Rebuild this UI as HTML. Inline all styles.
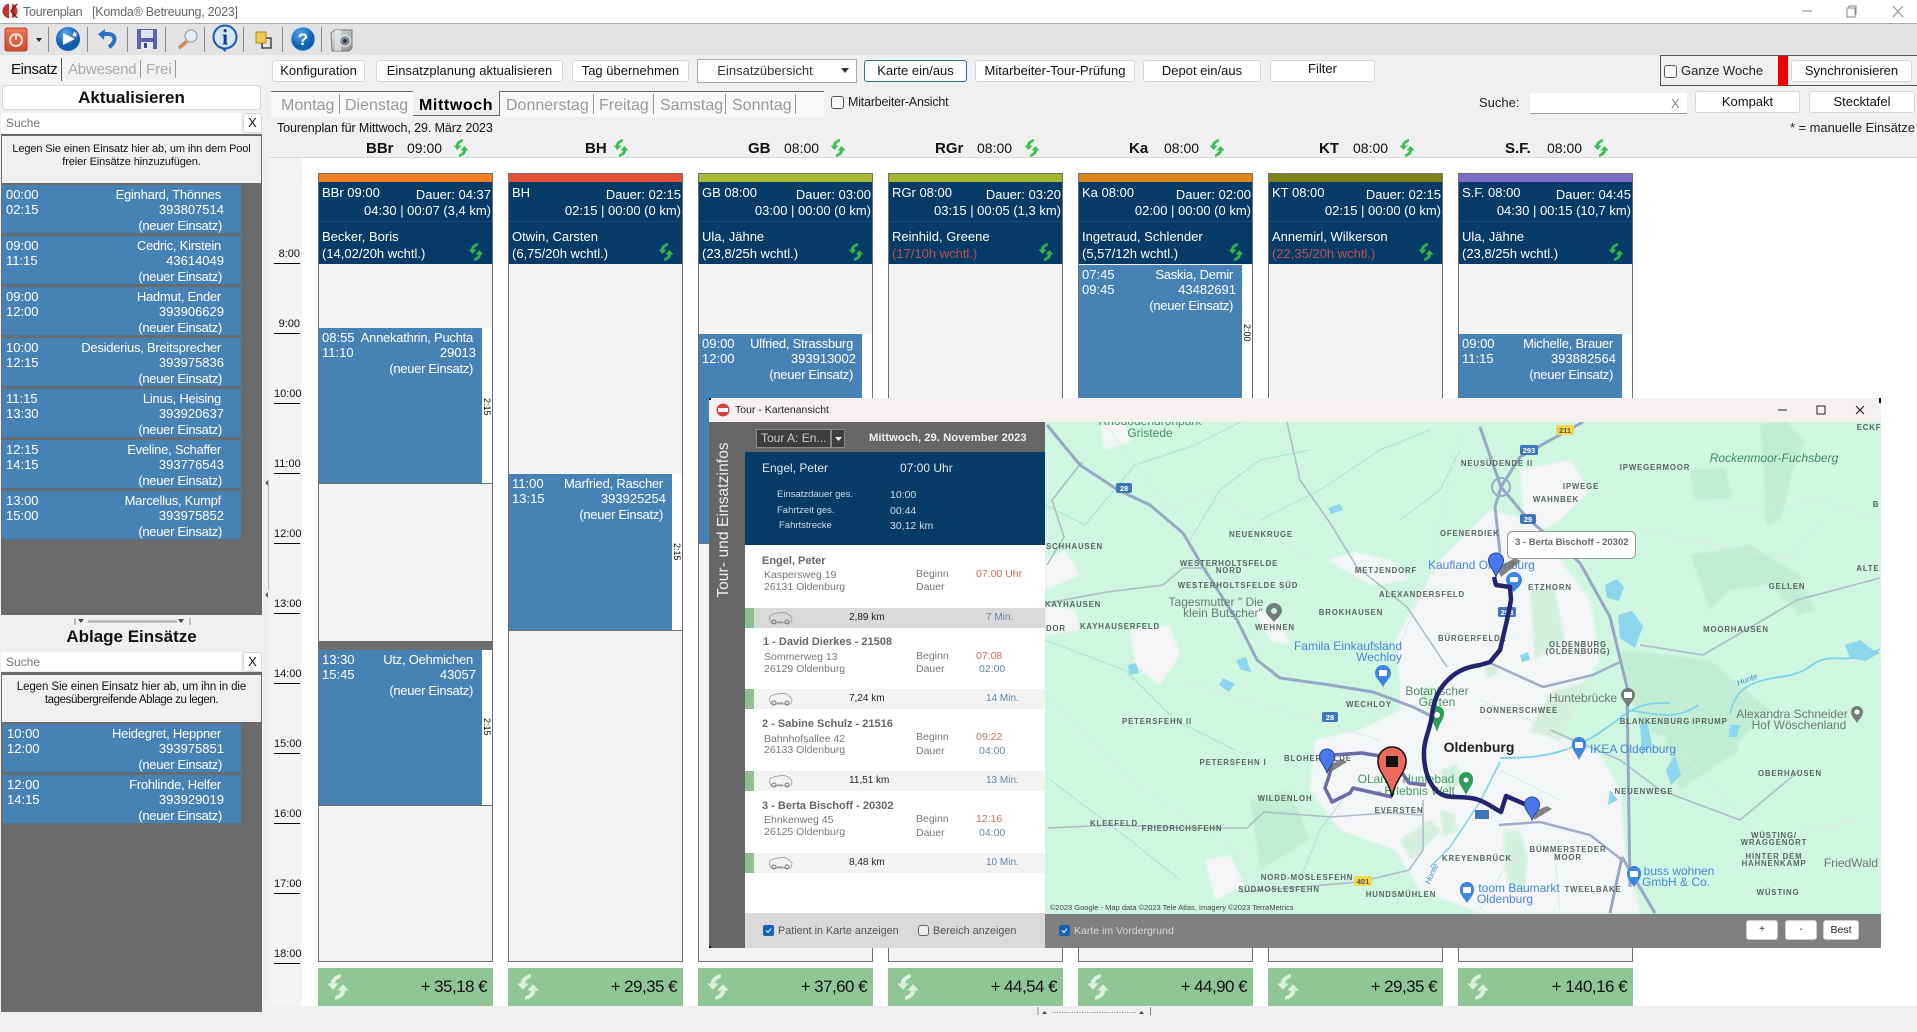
<!DOCTYPE html>
<html lang="de"><head><meta charset="utf-8"><title>Tourenplan</title>
<style>
html,body{margin:0;padding:0;width:1917px;height:1032px;overflow:hidden;background:#f0f0f0}
body{position:relative;font-family:"Liberation Sans",sans-serif;font-size:13px;color:#111}
.a,.b,.it,.col,.ev,.tot,.cb,.h,.t,.ctime{position:absolute;white-space:nowrap}
.t{line-height:16px}
.b{background:#fff;border:1px solid #d6d6d6;border-radius:3px;text-align:center;box-sizing:border-box;font-size:13px;line-height:20px;color:#111}
.cb{width:13px;height:13px;border:1px solid #555;border-radius:3px;background:#fff;box-sizing:border-box}
.it{background:#4682b4;color:#fff;height:48px;width:239px;left:2px;box-shadow:0 1px 0 #5b6f80}
.it span,.ev span{position:absolute;line-height:16px;white-space:nowrap}
.l1{top:1.5px;left:4px}.l2{top:16.5px;left:4px}
.r1{top:1.5px;right:20px;letter-spacing:-.25px}.r2{top:16.5px;right:17px}.r3{top:32.5px;right:19px;letter-spacing:-.3px}
.col{top:173px;width:175px;height:789px;border:1px solid #6e6e6e;box-sizing:border-box;background:#f3f3f3}
.col .bar{position:absolute;left:0;right:0;top:0;height:8px}
.col .hd{position:absolute;left:0;right:0;top:8px;height:82px;background:#053b66;color:#fff}
.col .hd span{position:absolute;line-height:16px;white-space:nowrap}
.col .hd .dv{left:0;right:0;top:39px;height:1px;background:#1a4d75}
.col .hd svg{position:absolute;left:149px;top:61px;width:16px;height:18px;color:#33b24a}
.ev{left:0;width:173px;background:#fff;border-bottom:1px solid #6e6e6e;box-sizing:border-box}
.ev .bl{position:absolute;left:0;top:0;bottom:0;width:163px;background:#4682b4;color:#fff}
.ev .r1{top:2px;right:9px}.ev .r2{top:17px;right:6px}.ev .r3{top:33px;right:9px}
.ev .l1{top:2px;left:3px}.ev .l2{top:17px;left:3px}
.ev .rot{position:absolute;left:163px;width:10px;writing-mode:vertical-rl;font-size:9px;line-height:10px;color:#000;text-align:center}
.h{top:139px;line-height:18px;font-size:14px}
.h b{font-size:15px}
.hi{position:absolute;top:139px;width:16px;height:18px;color:#3cc04f}
.tm{position:absolute;left:274px;width:26px;border-bottom:1px solid #000;height:16px;text-align:right;font-size:11px;line-height:14px;color:#111}
.tot{top:968px;width:175px;height:38px;background:#90c695;color:#111;font-size:17px;line-height:38px;text-align:right;box-sizing:border-box;padding-right:6px;letter-spacing:-.55px}
.tot svg{position:absolute;left:8px;top:6px;width:24px;height:26px;color:#dcefdc}
.tab{position:absolute;top:94.500px;font-size:16px;line-height:22px;color:#9a9a9a}
.sep{position:absolute;width:1px;background:#999}
.m{font-size:10.500px;color:#777;position:absolute;line-height:13px;white-space:nowrap}
.mb{font-size:11px;font-weight:bold;color:#666;position:absolute;line-height:14px;white-space:nowrap}
.strip{position:absolute;left:745px;width:300px;height:20px;background:#f3f3f3}
.strip i{position:absolute;left:0;top:0;bottom:0;width:9px;background:#8cc08e}
.strip svg{position:absolute;left:24px;top:2px;width:24px;height:16px}
.strip span{position:absolute;line-height:20px;font-size:10px;white-space:nowrap}
.map text{font-family:"Liberation Sans",sans-serif}
.c{font-size:7.800px;font-weight:bold;letter-spacing:.85px;fill:#5a6662;text-anchor:middle}
.g{font-size:12px;fill:#4d8d6c;text-anchor:middle}
.bl2{font-size:12px;fill:#4a86d6;text-anchor:middle}
.gr{font-size:12px;fill:#6d7a76;text-anchor:middle}
.sh{font-size:7.500px;font-weight:bold;fill:#fff;text-anchor:middle}
</style></head><body>

<svg width="0" height="0" style="position:absolute"><defs>
<symbol id="r" viewBox="0 0 16 18"><path d="M10 0C6 1 3 3 3 6.500H.5L4.500 11 8.500 6.500H6C6 5 7.500 3.500 10 2.500zM6 18C10 17 13 15 13 11.500H15.500L11.500 7 7.500 11.500H10C10 13 8.500 14.500 6 15.500z" fill="currentColor"/></symbol>
<symbol id="car" viewBox="0 0 24 16"><path d="M1 6C4 3 14 2 17 3c3 1 5 4 6 5 0 3-1 5-2 5H2C1 11 0 8 1 6z" fill="none" stroke="#999" stroke-width=".8"/><circle cx="5" cy="12" r="2" fill="none" stroke="#777"/><circle cx="18" cy="12" r="2" fill="none" stroke="#777"/><path d="M8 12h6" stroke="#888"/></symbol>
<filter id="sf"><feGaussianBlur stdDeviation="1"/></filter>
</defs></svg>

<!-- title bar -->
<div class="a" style="left:0;top:0;width:1917px;height:23px;background:#fff;border-bottom:1px solid #a8a8a8"></div>
<svg class="a" style="left:2px;top:3px" width="16" height="16" viewBox="0 0 16 16"><circle cx="8" cy="8" r="7.500" fill="#c5332c"/><path d="M7 0h3v16H7z" fill="#fff"/><path d="M8 8l6-7h2L10 8l6 7h-2z" fill="#7a1f1c"/></svg>
<div class="t" style="left:23px;top:4px;font-size:12.500px;color:#666;letter-spacing:-.25px">Tourenplan &nbsp; [Komda® Betreuung, 2023]</div>
<svg class="a" style="left:1790px;top:0" width="127" height="23" viewBox="0 0 127 23"><path d="M12 11h10" stroke="#888"/><path d="M57 8h8v9h-8zM59 8V6h7v8h-1" fill="none" stroke="#888"/><path d="M103 6l10 11M113 6l-10 11" stroke="#888"/></svg>

<!-- toolbar -->
<div class="a" style="left:0;top:24px;width:1917px;height:31px;background:#e3e3e3"></div>
<svg class="a" style="left:0;top:0" width="400" height="56" viewBox="0 0 400 56">
<defs><linearGradient id="pw" x1="0" y1="0" x2="0" y2="1"><stop offset="0" stop-color="#f07a55"/><stop offset="1" stop-color="#cf4a30"/></linearGradient>
<radialGradient id="bl" cx=".4" cy=".3"><stop offset="0" stop-color="#5aa8ee"/><stop offset="1" stop-color="#0e5fb0"/></radialGradient>
<linearGradient id="cam" x1="0" y1="0" x2="1" y2="1"><stop offset="0" stop-color="#e8e8e8"/><stop offset="1" stop-color="#8e8e8e"/></linearGradient></defs>
<rect x="5" y="28" width="22" height="23" rx="2" fill="url(#pw)" stroke="#b5452e"/>
<circle cx="16" cy="40" r="6" fill="none" stroke="#f6e2d8" stroke-width="2"/><path d="M16 35v5" stroke="#f6e2d8" stroke-width="2"/>
<path d="M36 38h6l-3 4z" fill="#222"/>
<g stroke="#8a8a8a"><path d="M48.500 27v25M87.500 27v25M127.500 27v25M165.500 27v25M204.500 27v25M243.500 27v25M282.500 27v25M321.500 27v25"/></g>
<circle cx="68" cy="39" r="12" fill="url(#bl)"/><path d="M63 33l12 6-12 6z" fill="#fff"/><path d="M74 31l1 2 2-1-1 2 2 1-2 .5.500 2-2-1.500-1 1.500v-2l-2-.5 2-1z" fill="#fff"/>
<path d="M109 47c7-4 8-13-1-13h-5" fill="none" stroke="#2a6fc4" stroke-width="4"/><path d="M105 29l-7 5 6 6z" fill="#2a6fc4"/>
<rect x="137" y="29" width="20" height="20" fill="#5b63ad"/><rect x="141" y="30" width="12" height="8" fill="#dfe2f2"/><rect x="141" y="42" width="12" height="7" fill="#e8ecf4"/><rect x="144" y="43" width="3" height="5" fill="#3e4682"/>
<path d="M187 41l-8 7" stroke="#d08a58" stroke-width="3.500"/><circle cx="191" cy="36" r="6" fill="#e6f0f8" stroke="#9db5c8" stroke-width="1.500"/>
<path d="M225 52l-6-6h9z" fill="#1a5ca8"/><circle cx="225" cy="37" r="11.500" fill="#d4e6f6" stroke="#1a5ca8" stroke-width="2"/><text x="225" y="44.500" font-family="Liberation Serif,serif" font-weight="bold" font-size="22" text-anchor="middle" fill="#113f86">i</text>
<rect x="256" y="32" width="10" height="11" fill="#f1c84e" stroke="#b08b20"/><path d="M266 38h5v10h-9v-5" fill="none" stroke="#444" stroke-width="1.500"/>
<circle cx="303" cy="39" r="12" fill="url(#bl)" stroke="#b8d2ee"/><text x="303" y="45" font-weight="bold" font-size="17" text-anchor="middle" fill="#fff" font-family="Liberation Sans,sans-serif">?</text>
<path d="M331 33l4-3h17v18l-3 3h-17z" fill="url(#cam)" stroke="#777"/><path d="M335 30h6v21h-6z" fill="#eaeaea" opacity=".7"/><circle cx="345" cy="41" r="5.500" fill="#7f8b94" stroke="#e2e2e2" stroke-width="1.500"/><circle cx="345" cy="41" r="2" fill="#2b3540"/>
</svg>

<!-- left panel -->
<div class="a" style="left:0;top:55px;width:263px;height:30px;background:#f2f2f2"></div>
<div class="t" style="left:11px;top:62px;font-size:15px;letter-spacing:-.4px">Einsatz</div>
<div class="sep" style="left:61px;top:58px;height:23px;background:#555"></div>
<div class="t" style="left:68px;top:62px;font-size:15px;letter-spacing:-.2px;color:#aaa">Abwesend</div>
<div class="sep" style="left:140px;top:60px;height:18px"></div>
<div class="t" style="left:146px;top:62px;font-size:15px;color:#aaa">Frei</div>
<div class="sep" style="left:175px;top:60px;height:18px"></div>
<div class="b" style="left:2px;top:85px;width:259px;height:25px;font-weight:bold;font-size:17px;line-height:24px;color:#111;border-radius:4px">Aktualisieren</div>
<div class="a" style="left:1px;top:113px;width:240px;height:20px;background:#fff"></div>
<div class="t" style="left:6px;top:115px;font-size:12px;color:#777">Suche</div>
<div class="b" style="left:243px;top:113px;width:19px;height:20px;line-height:18px;font-size:13px">X</div>
<div class="a" style="left:1px;top:134px;width:261px;height:481px;background:#6b6b6b"></div>
<div class="a" style="left:2px;top:136px;width:259px;height:47px;background:#f0f0f0"></div>
<div class="t" style="left:3px;top:141px;width:257px;text-align:center;font-size:11px;letter-spacing:-.12px">Legen Sie einen Einsatz hier ab, um ihn dem Pool</div>
<div class="t" style="left:3px;top:154px;width:257px;text-align:center;font-size:11px;letter-spacing:-.12px">freier Einsätze hinzuzufügen.</div>

<div class="it" style="top:185px"><span class="l1">00:00</span><span class="l2">02:15</span><span class="r1">Eginhard, Thönnes</span><span class="r2">393807514</span><span class="r3">(neuer Einsatz)</span></div>
<div class="it" style="top:236px"><span class="l1">09:00</span><span class="l2">11:15</span><span class="r1">Cedric, Kirstein</span><span class="r2">43614049</span><span class="r3">(neuer Einsatz)</span></div>
<div class="it" style="top:287px"><span class="l1">09:00</span><span class="l2">12:00</span><span class="r1">Hadmut, Ender</span><span class="r2">393906629</span><span class="r3">(neuer Einsatz)</span></div>
<div class="it" style="top:338px"><span class="l1">10:00</span><span class="l2">12:15</span><span class="r1">Desiderius, Breitsprecher</span><span class="r2">393975836</span><span class="r3">(neuer Einsatz)</span></div>
<div class="it" style="top:389px"><span class="l1">11:15</span><span class="l2">13:30</span><span class="r1">Linus, Heising</span><span class="r2">393920637</span><span class="r3">(neuer Einsatz)</span></div>
<div class="it" style="top:440px"><span class="l1">12:15</span><span class="l2">14:15</span><span class="r1">Eveline, Schaffer</span><span class="r2">393776543</span><span class="r3">(neuer Einsatz)</span></div>
<div class="it" style="top:491px"><span class="l1">13:00</span><span class="l2">15:00</span><span class="r1">Marcellus, Kumpf</span><span class="r2">393975852</span><span class="r3">(neuer Einsatz)</span></div>

<svg class="a" style="left:70px;top:616px" width="125" height="10" viewBox="0 0 125 10"><path d="M5 2v7M120 2v7" stroke="#888"/><path d="M8 3h6l-3 4zM108 3h6l-3 4z" fill="#444"/><path d="M18 5.500h89" stroke="#aaa" stroke-width="2"/></svg>
<div class="t" style="left:0;top:627px;width:263px;text-align:center;font-weight:bold;font-size:17px;line-height:20px">Ablage Einsätze</div>
<div class="a" style="left:1px;top:652px;width:240px;height:19px;background:#fff"></div>
<div class="t" style="left:6px;top:654px;font-size:12px;color:#777">Suche</div>
<div class="b" style="left:243px;top:652px;width:19px;height:20px;line-height:18px;font-size:13px">X</div>
<div class="a" style="left:1px;top:672px;width:261px;height:340px;background:#6b6b6b"></div>
<div class="a" style="left:2px;top:675px;width:259px;height:47px;background:#f0f0f0"></div>
<div class="t" style="left:3px;top:679px;width:257px;text-align:center;font-size:11.500px;letter-spacing:-.1px">Legen Sie einen Einsatz hier ab, um ihn in die</div>
<div class="t" style="left:3px;top:692px;width:257px;text-align:center;font-size:11.500px;letter-spacing:-.4px">tagesübergreifende Ablage zu legen.</div>
<div class="it" style="top:724px;left:3px;width:238px"><span class="l1">10:00</span><span class="l2">12:00</span><span class="r1">Heidegret, Heppner</span><span class="r2">393975851</span><span class="r3">(neuer Einsatz)</span></div>
<div class="it" style="top:775px;left:3px;width:238px"><span class="l1">12:00</span><span class="l2">14:15</span><span class="r1">Frohlinde, Helfer</span><span class="r2">393929019</span><span class="r3">(neuer Einsatz)</span></div>

<!-- splitter -->
<div class="sep" style="left:268px;top:480px;height:110px;background:#bbb"></div>
<svg class="a" style="left:263px;top:478px" width="6" height="122" viewBox="0 0 6 122"><path d="M5 2 2 5l3 3zM5 114l-3 3 3 3z" fill="#666"/></svg>

<!-- top buttons -->
<div class="b" style="left:272px;top:60px;width:93px;height:22px">Konfiguration</div>
<div class="b" style="left:376px;top:60px;width:187px;height:22px">Einsatzplanung aktualisieren</div>
<div class="b" style="left:572px;top:60px;width:117px;height:22px">Tag übernehmen</div>
<div class="b" style="left:697px;top:59px;width:160px;height:24px;border-color:#aaa;border-radius:0;line-height:22px;color:#333;padding-right:24px">Einsatzübersicht</div>
<svg class="a" style="left:841px;top:68px" width="8" height="6"><path d="M0 0h8L4 5z" fill="#333"/></svg>
<div class="b" style="left:864px;top:60px;width:103px;height:22px;border-color:#2f6fa8">Karte ein/aus</div>
<div class="b" style="left:975px;top:60px;width:160px;height:22px">Mitarbeiter-Tour-Prüfung</div>
<div class="b" style="left:1143px;top:60px;width:118px;height:22px">Depot ein/aus</div>
<div class="b" style="left:1270px;top:60px;width:105px;height:22px;line-height:16px">Filter</div>

<div class="a" style="left:1660px;top:55px;width:257px;height:31px;border:1px solid #555;box-sizing:border-box;border-right:0"></div>
<div class="cb" style="left:1664px;top:65px"></div>
<div class="t" style="left:1681px;top:63px;font-size:13px;color:#222">Ganze Woche</div>
<div class="a" style="left:1778px;top:56px;width:10px;height:30px;background:#f00000"></div>
<div class="b" style="left:1791px;top:60px;width:121px;height:22px">Synchronisieren</div>
<div class="t" style="left:1479px;top:95px;font-size:13px;color:#222">Suche:</div>
<div class="a" style="left:1530px;top:93px;width:157px;height:21px;background:#fff;border-bottom:1px solid #999;box-sizing:border-box"></div>
<div class="t" style="left:1671px;top:96px;font-size:13px;color:#888">X</div>
<div class="b" style="left:1695px;top:91px;width:105px;height:22px">Kompakt</div>
<div class="b" style="left:1809px;top:91px;width:106px;height:22px">Stecktafel</div>
<div class="t" style="right:2px;top:120px;font-size:13px;color:#222;letter-spacing:-.05px">* = manuelle Einsätze</div>

<!-- day tabs -->
<div class="a" style="left:271px;top:91px;width:553px;height:26px;background:#f8f8f8"></div>
<div class="a" style="left:271px;top:91px;width:142px;height:1px;background:#666"></div>
<div class="a" style="left:413px;top:91px;width:87px;height:25px;background:#f0f0f0;border-bottom:1px solid #666;border-right:1px solid #666;box-sizing:border-box"></div>
<div class="a" style="left:499px;top:91px;width:325px;height:1px;background:#666"></div>
<div class="tab" style="left:281px">Montag</div><div class="sep" style="left:339px;top:94px;height:20px"></div>
<div class="tab" style="left:345px">Dienstag</div>
<div class="tab" style="left:419px;color:#000;font-weight:bold;letter-spacing:.6px">Mittwoch</div>
<div class="tab" style="left:506px">Donnerstag</div><div class="sep" style="left:593px;top:94px;height:20px"></div>
<div class="tab" style="left:599px">Freitag</div><div class="sep" style="left:653px;top:94px;height:20px"></div>
<div class="tab" style="left:660px">Samstag</div><div class="sep" style="left:725px;top:94px;height:20px"></div>
<div class="tab" style="left:732px">Sonntag</div><div class="sep" style="left:795px;top:94px;height:20px"></div>
<div class="cb" style="left:831px;top:96px"></div>
<div class="t" style="left:848px;top:94px;font-size:12.500px;color:#222;letter-spacing:-.2px">Mitarbeiter-Ansicht</div>
<div class="t" style="left:277px;top:120px;font-size:12.500px;color:#111;letter-spacing:-.1px">Tourenplan für Mittwoch, 29. März 2023</div>

<!-- grid background -->
<div class="a" style="left:270px;top:157px;width:1647px;height:1px;background:#d6d6d6"></div>
<div class="a" style="left:302px;top:158px;width:1615px;height:848px;background:#fff"></div>
<div class="a" style="left:270px;top:158px;width:32px;height:848px;background:#f3f3f3"></div>

<div class="tm" style="top:247px">8:00</div>
<div class="tm" style="top:317px">9:00</div>
<div class="tm" style="top:387px">10:00</div>
<div class="tm" style="top:457px">11:00</div>
<div class="tm" style="top:527px">12:00</div>
<div class="tm" style="top:597px">13:00</div>
<div class="tm" style="top:667px">14:00</div>
<div class="tm" style="top:737px">15:00</div>
<div class="tm" style="top:807px">16:00</div>
<div class="tm" style="top:877px">17:00</div>
<div class="tm" style="top:947px">18:00</div>

<!-- column heads -->
<div class="h" style="left:366px"><b>BBr</b></div><div class="h" style="left:407px">09:00</div><svg class="hi" style="left:453px"><use href="#r"/></svg>
<div class="h" style="left:585px"><b>BH</b></div><svg class="hi" style="left:613px"><use href="#r"/></svg>
<div class="h" style="left:748px"><b>GB</b></div><div class="h" style="left:784px">08:00</div><svg class="hi" style="left:830px"><use href="#r"/></svg>
<div class="h" style="left:935px"><b>RGr</b></div><div class="h" style="left:977px">08:00</div><svg class="hi" style="left:1024px"><use href="#r"/></svg>
<div class="h" style="left:1129px"><b>Ka</b></div><div class="h" style="left:1164px">08:00</div><svg class="hi" style="left:1209px"><use href="#r"/></svg>
<div class="h" style="left:1319px"><b>KT</b></div><div class="h" style="left:1353px">08:00</div><svg class="hi" style="left:1399px"><use href="#r"/></svg>
<div class="h" style="left:1505px"><b>S.F.</b></div><div class="h" style="left:1547px">08:00</div><svg class="hi" style="left:1593px"><use href="#r"/></svg>

<!-- columns -->
<div class="col" style="left:318px"><div class="bar" style="background:#f58220"></div><div class="hd"><span style="left:3px;top:3px">BBr 09:00</span><span style="right:1px;top:5px">Dauer: 04:37</span><span style="right:1px;top:21px">04:30 | 00:07 (3,4 km)</span><span class="dv"></span><span style="left:3px;top:47px">Becker, Boris</span><span style="left:3px;top:64px">(14,02/20h wchtl.)</span><svg><use href="#r"/></svg></div>
<div class="ev" style="top:154px;height:156px"><div class="bl"><span class="l1">08:55</span><span class="l2">11:10</span><span class="r1">Annekathrin, Puchta</span><span class="r2">29013</span><span class="r3">(neuer Einsatz)</span></div><span class="rot" style="top:70px">2:15</span></div>
<div class="a" style="left:0;top:467px;width:173px;height:9px;background:#6e6e6e"></div>
<div class="ev" style="top:476px;height:156px"><div class="bl"><span class="l1">13:30</span><span class="l2">15:45</span><span class="r1">Utz, Oehmichen</span><span class="r2">43057</span><span class="r3">(neuer Einsatz)</span></div><span class="rot" style="top:68px">2:15</span></div></div>

<div class="col" style="left:508px"><div class="bar" style="background:#e8503a"></div><div class="hd"><span style="left:3px;top:3px">BH</span><span style="right:1px;top:5px">Dauer: 02:15</span><span style="right:1px;top:21px">02:15 | 00:00 (0 km)</span><span class="dv"></span><span style="left:3px;top:47px">Otwin, Carsten</span><span style="left:3px;top:64px">(6,75/20h wchtl.)</span><svg><use href="#r"/></svg></div>
<div class="ev" style="top:300px;height:157px"><div class="bl"><span class="l1">11:00</span><span class="l2">13:15</span><span class="r1">Marfried, Rascher</span><span class="r2">393925254</span><span class="r3">(neuer Einsatz)</span></div><span class="rot" style="top:69px">2:15</span></div></div>

<div class="col" style="left:698px"><div class="bar" style="background:#a9bb35"></div><div class="hd"><span style="left:3px;top:3px">GB 08:00</span><span style="right:1px;top:5px">Dauer: 03:00</span><span style="right:1px;top:21px">03:00 | 00:00 (0 km)</span><span class="dv"></span><span style="left:3px;top:47px">Ula, Jähne</span><span style="left:3px;top:64px">(23,8/25h wchtl.)</span><svg><use href="#r"/></svg></div>
<div class="ev" style="top:160px;height:210px"><div class="bl"><span class="l1">09:00</span><span class="l2">12:00</span><span class="r1">Ulfried, Strassburg</span><span class="r2">393913002</span><span class="r3">(neuer Einsatz)</span></div></div></div>

<div class="col" style="left:888px"><div class="bar" style="background:#a5b52d"></div><div class="hd"><span style="left:3px;top:3px">RGr 08:00</span><span style="right:1px;top:5px">Dauer: 03:20</span><span style="right:1px;top:21px">03:15 | 00:05 (1,3 km)</span><span class="dv"></span><span style="left:3px;top:47px">Reinhild, Greene</span><span style="left:3px;top:64px;color:#c0504d">(17/10h wchtl.)</span><svg><use href="#r"/></svg></div></div>

<div class="col" style="left:1078px"><div class="bar" style="background:#df861a"></div><div class="hd"><span style="left:3px;top:3px">Ka 08:00</span><span style="right:1px;top:5px">Dauer: 02:00</span><span style="right:1px;top:21px">02:00 | 00:00 (0 km)</span><span class="dv"></span><span style="left:3px;top:47px">Ingetraud, Schlender</span><span style="left:3px;top:64px">(5,57/12h wchtl.)</span><svg><use href="#r"/></svg></div>
<div class="ev" style="top:91px;height:220px"><div class="bl"><span class="l1">07:45</span><span class="l2">09:45</span><span class="r1">Saskia, Demir</span><span class="r2">43482691</span><span class="r3">(neuer Einsatz)</span></div><span class="rot" style="top:59px">2:00</span></div></div>

<div class="col" style="left:1268px"><div class="bar" style="background:#7f8215"></div><div class="hd"><span style="left:3px;top:3px">KT 08:00</span><span style="right:1px;top:5px">Dauer: 02:15</span><span style="right:1px;top:21px">02:15 | 00:00 (0 km)</span><span class="dv"></span><span style="left:3px;top:47px">Annemirl, Wilkerson</span><span style="left:3px;top:64px;color:#c0504d">(22,35/20h wchtl.)</span><svg><use href="#r"/></svg></div></div>

<div class="col" style="left:1458px"><div class="bar" style="background:#7a6cc4"></div><div class="hd"><span style="left:3px;top:3px">S.F. 08:00</span><span style="right:1px;top:5px">Dauer: 04:45</span><span style="right:1px;top:21px">04:30 | 00:15 (10,7 km)</span><span class="dv"></span><span style="left:3px;top:47px">Ula, Jähne</span><span style="left:3px;top:64px">(23,8/25h wchtl.)</span><svg><use href="#r"/></svg></div>
<div class="ev" style="top:160px;height:210px"><div class="bl"><span class="l1">09:00</span><span class="l2">11:15</span><span class="r1">Michelle, Brauer</span><span class="r2">393882564</span><span class="r3">(neuer Einsatz)</span></div></div></div>

<!-- totals -->
<div class="tot" style="left:318px"><svg><use href="#r"/></svg>+ 35,18 €</div>
<div class="tot" style="left:508px"><svg><use href="#r"/></svg>+ 29,35 €</div>
<div class="tot" style="left:698px"><svg><use href="#r"/></svg>+ 37,60 €</div>
<div class="tot" style="left:888px"><svg><use href="#r"/></svg>+ 44,54 €</div>
<div class="tot" style="left:1078px"><svg><use href="#r"/></svg>+ 44,90 €</div>
<div class="tot" style="left:1268px"><svg><use href="#r"/></svg>+ 29,35 €</div>
<div class="tot" style="left:1458px"><svg><use href="#r"/></svg>+ 140,16 €</div>
<svg class="a" style="left:1035px;top:1006px" width="125" height="10" viewBox="0 0 125 10"><path d="M3 1v8M115.500 1v8" stroke="#888"/><path d="M7 8h5l-2.500-3zM104 8h5l-2.500-3z" fill="#444"/><path d="M17 6.500h84" stroke="#888" stroke-dasharray="1 1.500"/></svg>

<!-- MODAL -->
<div class="a" style="left:709px;top:398px;width:1172px;height:24px;background:#f5f1f0"></div>
<svg class="a" style="left:716px;top:403px" width="14" height="14" viewBox="0 0 14 14"><circle cx="7" cy="7" r="6.500" fill="#d5433b"/><rect x="2" y="5" width="10" height="4" fill="#fff"/></svg>
<div class="t" style="left:735px;top:402px;font-size:10.500px;color:#222">Tour - Kartenansicht</div>
<svg class="a" style="left:1770px;top:398px" width="110" height="24" viewBox="0 0 110 24"><path d="M8 12h9" stroke="#222"/><rect x="47" y="8" width="8" height="8" fill="none" stroke="#222"/><path d="M86 8l8 8M94 8l-8 8" stroke="#222" stroke-width="1.200"/></svg>
<div class="a" style="left:709px;top:422px;width:36px;height:526px;background:#666"></div>
<div class="a" style="left:709px;top:398px;width:2px;height:2px;background:#111"></div>
<div class="a" style="left:709px;top:946px;width:2px;height:2px;background:#111"></div>
<div class="a" style="left:1879px;top:398px;width:2px;height:5px;background:#111"></div>
<div class="t" style="left:724px;top:520px;width:0;height:0;font-size:15.500px;color:#eee"><span style="position:absolute;left:0;top:0;transform:translate(-50%,-50%) rotate(-90deg);transform-origin:50% 50%;line-height:18px;letter-spacing:.1px">Tour- und Einsatzinfos</span></div>
<div class="a" style="left:745px;top:422px;width:300px;height:30px;background:#666"></div>
<div class="a" style="left:756px;top:429px;width:75px;height:19px;background:#3d3d3d;border:1px solid #888;box-sizing:border-box;color:#ccc;font-size:12px;line-height:17px;padding-left:4px;overflow:hidden">Tour A: En...</div>
<div class="a" style="left:831px;top:429px;width:14px;height:19px;background:#3d3d3d;border:1px solid #888;box-sizing:border-box"></div>
<svg class="a" style="left:835px;top:437px" width="7" height="4"><path d="M0 0h7L3.500 4z" fill="#eee"/></svg>
<div class="t" style="left:869px;top:430px;font-size:11.300px;font-weight:bold;color:#eee">Mittwoch, 29. November 2023</div>

<div class="a" style="left:745px;top:452px;width:300px;height:93px;background:#053b66"></div>
<div class="t" style="left:762px;top:460px;font-size:12px;color:#e0e8f0">Engel, Peter</div>
<div class="t" style="left:900px;top:460px;font-size:12px;color:#e0e8f0">07:00 Uhr</div>
<div class="t" style="left:777px;top:487px;font-size:9.500px;color:#d0dce6">Einsatzdauer ges.</div><div class="t" style="left:890px;top:487px;font-size:10.500px;color:#d0dce6">10:00</div>
<div class="t" style="left:777px;top:503px;font-size:9.500px;color:#d0dce6">Fahrtzeit ges.</div><div class="t" style="left:890px;top:503px;font-size:10.500px;color:#d0dce6">00:44</div>
<div class="t" style="left:779px;top:518px;font-size:9.500px;color:#d0dce6">Fahrtstrecke</div><div class="t" style="left:890px;top:518px;font-size:10.500px;color:#d0dce6">30,12 km</div>

<div class="a" style="left:745px;top:545px;width:300px;height:368px;background:#fff"></div>
<div class="a" style="left:745px;top:913px;width:300px;height:35px;background:#d9d9d9"></div>

<div class="mb" style="left:762px;top:554px">Engel, Peter</div>
<div class="m" style="left:764px;top:569px">Kaspersweg 19</div><div class="m" style="left:764px;top:581px">26131 Oldenburg</div>
<div class="m" style="left:916px;top:568px">Beginn</div><div class="m" style="left:916px;top:581px">Dauer</div>
<div class="m" style="left:976px;top:568px;color:#d0705a">07:00 Uhr</div>
<div class="strip" style="top:608px;background:#d9d9d9"><i></i><svg><use href="#car"/></svg><span style="left:104px;color:#222">2,89 km</span><span style="left:241px;color:#5f86ad">7 Min.</span></div>

<div class="mb" style="left:763px;top:635px">1 - David Dierkes - 21508</div>
<div class="m" style="left:764px;top:651px">Sommerweg 13</div><div class="m" style="left:764px;top:663px">26129 Oldenburg</div>
<div class="m" style="left:916px;top:650px">Beginn</div><div class="m" style="left:916px;top:663px">Dauer</div>
<div class="m" style="left:976px;top:650px;color:#d0705a">07:08</div><div class="m" style="left:979px;top:663px;color:#5f8aa8">02:00</div>
<div class="strip" style="top:689px"><i></i><svg><use href="#car"/></svg><span style="left:104px;color:#222">7,24 km</span><span style="left:241px;color:#5f86ad">14 Min.</span></div>

<div class="mb" style="left:762px;top:717px">2 - Sabine Schulz - 21516</div>
<div class="m" style="left:764px;top:733px">Bahnhofsallee 42</div><div class="m" style="left:764px;top:744px">26133 Oldenburg</div>
<div class="m" style="left:916px;top:731px">Beginn</div><div class="m" style="left:916px;top:745px">Dauer</div>
<div class="m" style="left:976px;top:731px;color:#d0705a">09:22</div><div class="m" style="left:979px;top:745px;color:#5f8aa8">04:00</div>
<div class="strip" style="top:771px"><i></i><svg><use href="#car"/></svg><span style="left:104px;color:#222">11,51 km</span><span style="left:241px;color:#5f86ad">13 Min.</span></div>

<div class="mb" style="left:762px;top:799px">3 - Berta Bischoff - 20302</div>
<div class="m" style="left:764px;top:814px">Ehnkenweg 45</div><div class="m" style="left:764px;top:826px">26125 Oldenburg</div>
<div class="m" style="left:916px;top:813px">Beginn</div><div class="m" style="left:916px;top:827px">Dauer</div>
<div class="m" style="left:976px;top:813px;color:#d0705a">12:16</div><div class="m" style="left:979px;top:827px;color:#5f8aa8">04:00</div>
<div class="strip" style="top:853px"><i></i><svg><use href="#car"/></svg><span style="left:104px;color:#222">8,48 km</span><span style="left:241px;color:#5f86ad">10 Min.</span></div>

<div class="a" style="left:763px;top:925px;width:11px;height:11px;background:#1762b8;border-radius:2px"></div>
<svg class="a" style="left:764px;top:926px" width="9" height="9"><path d="M2 4.500l2 2 3-4" fill="none" stroke="#fff"/></svg>
<div class="t" style="left:778px;top:923px;font-size:10.800px;color:#555">Patient in Karte anzeigen</div>
<div class="cb" style="left:918px;top:925px;width:11px;height:11px;border-color:#666;background:#eee"></div>
<div class="t" style="left:933px;top:923px;font-size:10.800px;color:#555">Bereich anzeigen</div>

<!-- MAP -->
<svg class="a map" style="left:1045px;top:422px" width="836" height="492" viewBox="1045 422 836 492">
<rect x="1045" y="422" width="836" height="492" fill="#cff6e1"/>
<!-- darker green -->
<g fill="#c2edd5" filter="url(#sf)">
<path d="M1760 425l25-5 20 20-12 30-12 50-15 5-2-50z"/><path d="M1690 470l35-2 8 30-38 2z"/><path d="M1690 555l60-10 50 30 15 35-15 5-30-30-40 5-20 20z"/><path d="M1620 650l90 10 60 50-40 40-90-20z"/>
<path d="M1250 800l40-10 20 50-50 30z"/><path d="M1660 720l40-30 40 60-60 40z"/>
</g>
<!-- urban -->
<g fill="#f4f5f7" filter="url(#sf)">
<path d="M1395 640l45-80 50-50 40 10 30 40 30 40 10 60-30 40-15 35 45 20 20 35 5 60 15 63h-160l-60-23-25-40-55-20-30-40 5-50 45-10 40-20v-30z"/>
<path d="M1327 560l30-8 33 8 20 20-40 5zM1100 425l25-3 5 20-25 8zM1045 560l20-10 15 25-35 15zM1130 630l40-5 10 30-20 30-25-20zM1045 605l30 5 5 20-35 5z"/>
<path d="M1520 470l50-10 20 30-30 30-35 20z"/><path d="M1250 605l30 15 10 25-20-5z"/>
<path d="M1205 860l25-5 15 30-30 15z"/>
</g>
<!-- green pockets in town -->
<g fill="#d3f0de" filter="url(#sf)">
<path d="M1504 832l16-2 8 30-4 30-14 2-6-30zM1485 665l10-2 4 10-12 6zM1418 690l14-4 8 18-12 8zM1440 810l14 4 4 16-14 6zM1590 680l-30 60-30-8 20-40zM1530 590l25 0 10 50-30 20z"/>
<path d="M1400 840l30-20 12 10-30 30zM1440 770l18-6 4 20-16 6z"/>
</g>
<!-- rivers -->
<g fill="none" stroke="#a4e2d8" stroke-width="1">
<path d="M1045 505l40 20 50-60 60-20 60-30M1190 540l30-50 40-30 50-10M1260 520l60-30 60-40 50-20M1400 520l40-30 20-40"/>
<path d="M1045 640l80 30 50 50 60 30M1050 780l80 60 50 40M1300 880l20-50 30-40"/>
</g>
<g fill="none" stroke="#7fd4ea" stroke-width="1.800">
<path d="M1730 714c5-25 20-33 50-37s30-15 45-18 30 5 55-10"/>
<path d="M1628 710c30 5 50 10 70-5"/>
<path d="M1500 758c30 0 50-2 70-10s30-15 50-30 30-15 50-15"/>
<path d="M1500 762l-20 40-30 45-20 20" stroke-width="1.500"/>
</g>
<!-- lakes -->
<g fill="#8cd6ee">
<path d="M1605 585l12-6 7 8-5 14-12-3zM1618 615l14-4 11 15-8 22-15-10z"/><path d="M1845 645l15-5 10 8 10 5-15 8-15-3z"/>
<path d="M1328 508l12-4 3 6-12 4zM1236 660l10-3 5 15-10-2zM1223 678l12 6-6 8-10-7zM1128 665l8-2 3 10-10 2z"/>
<path d="M1640 725l7-4 5 24-10 10zM1675 755l6 20-10 10-5-15zM1610 790l8 10-10 5z"/><path d="M1730 725l10 0-3 12-8 0z"/>
<path d="M1520 655l8-3 2 8-8 2z"/>
</g>
<!-- minor roads -->
<g fill="none" stroke="#dbe8e4" stroke-width="1">
<path d="M1700 500l60 10 60-10 60 20M1640 530l100 20 50 10 30-40M1110 430l60 80 40-20 100 70M1460 430l-30 140-60 150M1050 700l80 80 120 80M1180 680l200 60M1680 750l80 90 100-20"/>
<path d="M1480 700l50 20 40 30M1500 770l60 30M1510 860l-30 50M1555 860l5 50"/>
</g>
<!-- secondary roads -->
<g fill="none" stroke="#b0bccb" stroke-width="1.600">
<path d="M1082 462l-30 38 12 37-17 28"/>
<path d="M1047 603l60-11 56-7 20-17h24"/>
<path d="M1287 422l13 58 30 43 27 44 50 40 40 60"/>
<path d="M1048 828l65-3 72 3 62 0 17-16 67 5 56-4 36 2"/>
<path d="M1241 892l118-10 50-12 14-20v-50"/>
<path d="M1640 645l63 10 94-55 83-22"/>
<path d="M1550 730l70 30 40 30 80 30 60-50"/>
</g>
<g fill="none" stroke="#9fadc6" stroke-width="2.500">
<path d="M1490 663l53 24 50-12 27-13"/>
<path d="M1499 825l41-3 50 13 32 25"/>
</g>
<!-- motorways -->
<g fill="none" stroke="#98a8c4" stroke-width="3" stroke-linejoin="round">
<path d="M1047 425l33 40 38 25 32 15 33 28 20 34 34 53 20 40 23 18 50 7 43 7 40 15 20 10"/>
<path d="M1480 427l21 60 26 31 53 45 30 54 17 70 3 200"/>
<path d="M1583 422l-63 35-19 30-6 20 5 46"/>
<path d="M1622 857l33 56"/>
<path d="M1610 913l12-56"/>
</g>
<circle cx="1501" cy="487" r="9" fill="none" stroke="#9aaac6" stroke-width="2"/>
<!-- shields -->
<g>
<rect x="1116" y="483" width="16" height="10" rx="2" fill="#3f76b8"/><text class="sh" x="1124" y="491">28</text>
<rect x="1322" y="712" width="16" height="10" rx="2" fill="#3f76b8"/><text class="sh" x="1330" y="720">28</text>
<rect x="1520" y="445" width="18" height="10" rx="2" fill="#3f76b8"/><text class="sh" x="1529" y="453">293</text>
<rect x="1520" y="514" width="16" height="10" rx="2" fill="#3f76b8"/><text class="sh" x="1528" y="522">29</text>
<rect x="1498" y="607" width="18" height="10" rx="2" fill="#3f76b8"/><text class="sh" x="1507" y="615">293</text>
<rect x="1556" y="425" width="18" height="10" rx="1" fill="#f2d64b"/><text class="sh" x="1565" y="433" style="fill:#555">211</text>
<rect x="1354" y="876" width="18" height="10" rx="1" fill="#f2d64b"/><text class="sh" x="1363" y="884" style="fill:#555">401</text>
<rect x="1475" y="810" width="14" height="9" fill="#3f76b8"/>
</g>
<!-- labels -->
<text class="g" x="1150" y="425">Rhododendronpark</text><text class="g" x="1150" y="437">Gristede</text>
<text class="c" x="1261" y="537">NEUENKRUGE</text>
<text class="c" x="1229" y="566">WESTERHOLTSFELDE</text><text class="c" x="1229" y="573">NORD</text>
<text class="c" x="1238" y="588">WESTERHOLTSFELDE SÜD</text>
<text class="gr" x="1216" y="606">Tagesmutter " Die</text><text class="gr" x="1223" y="617">klein Butscher"</text>
<text class="c" x="1046" y="549" style="text-anchor:start">SCHHAUSEN</text>
<text class="c" x="1073" y="607">KAYHAUSEN</text>
<text class="c" x="1120" y="629">KAYHAUSERFELD</text>
<text class="c" x="1046" y="631" style="text-anchor:start">DOR</text>
<text class="c" x="1386" y="573">METJENDORF</text>
<text class="c" x="1422" y="597">ALEXANDERSFELD</text>
<text class="c" x="1351" y="615">BROKHAUSEN</text>
<text class="c" x="1275" y="630">WEHNEN</text>
<text class="bl2" x="1348" y="650">Famila Einkaufsland</text><text class="bl2" x="1379" y="661">Wechloy</text>
<text class="g" x="1437" y="695">Botanischer</text><text class="g" x="1437" y="706">Garten</text>
<text class="c" x="1369" y="707">WECHLOY</text>
<text class="c" x="1440" y="536" style="text-anchor:start">OFENERDIEK</text>
<text class="c" x="1438" y="641" style="text-anchor:start">BÜRGERFELDE</text>
<text class="bl2" x="1428" y="569" style="text-anchor:start">Kaufland Oldenburg</text>
<text class="c" x="1533" y="466" style="text-anchor:end">NEUSÜDENDE II</text>
<text class="c" x="1655" y="470">IPWEGERMOOR</text>
<text x="1774" y="462" font-size="12" font-style="italic" text-anchor="middle" fill="#3f8a68">Rockenmoor-Fuchsberg</text>
<text class="c" x="1581" y="489">IPWEGE</text><text class="c" x="1556" y="502">WAHNBEK</text>
<text class="c" x="1550" y="590">ETZHORN</text>
<text class="c" x="1578" y="647">OLDENBURG</text><text class="c" x="1578" y="654">(OLDENBURG)</text>
<text class="c" x="1787" y="589">GELLEN</text><text class="c" x="1736" y="632">MOORHAUSEN</text>
<text class="c" x="1868" y="571">ALTE</text><text class="c" x="1869" y="430">ECKF</text><text class="c" x="1876" y="507">B</text>
<text class="gr" x="1583" y="702">Huntebrücke</text>
<text x="1748" y="682" font-size="8" font-style="italic" text-anchor="middle" fill="#3a92c4" transform="rotate(-20 1748 682)">Hunte</text>
<text class="c" x="1519" y="713">DONNERSCHWEE</text>
<text class="c" x="1157" y="724">PETERSFEHN II</text><text class="c" x="1233" y="765">PETERSFEHN I</text>
<text class="c" x="1284" y="761" style="text-anchor:start">BLOHERFELDE</text>
<text class="c" x="1285" y="801">WILDENLOH</text><text class="c" x="1114" y="826">KLEEFELD</text>
<text class="c" x="1182" y="831">FRIEDRICHSFEHN</text><text class="c" x="1399" y="813">EVERSTEN</text>
<text x="1479" y="752" font-size="14" font-weight="bold" text-anchor="middle" fill="#222">Oldenburg</text>
<text class="g" x="1406" y="783" style="fill:#3e9a5c">OLantis Huntebad</text><text class="g" x="1416" y="795" style="fill:#3e9a5c">- Erlebnis Welt</text>
<text class="bl2" x="1590" y="753" style="text-anchor:start">IKEA Oldenburg</text>
<text class="gr" x="1792" y="718">Alexandra Schneider</text><text class="gr" x="1799" y="729">Hof Wöschenland</text>
<text class="c" x="1655" y="724">BLANKENBURG</text><text class="c" x="1710" y="724">IPRUMP</text>
<text class="c" x="1790" y="776">OBERHAUSEN</text><text class="c" x="1644" y="794">NEUENWEGE</text>
<text class="c" x="1774" y="838">WÜSTING/</text><text class="c" x="1774" y="845">WRAGGENORT</text>
<text class="c" x="1774" y="859">HINTER DEM</text><text class="c" x="1774" y="866">HAHNENKAMP</text>
<text class="gr" x="1851" y="867">FriedWald</text>
<text class="bl2" x="1679" y="875">buss wohnen</text><text class="bl2" x="1676" y="886">GmbH &amp; Co.</text>
<text class="c" x="1568" y="852">BÜMMERSTEDER</text><text class="c" x="1568" y="860">MOOR</text>
<text class="c" x="1477" y="861">KREYENBRÜCK</text><text class="c" x="1593" y="892">TWEELBÄKE</text><text class="c" x="1778" y="895">WÜSTING</text>
<text class="bl2" x="1519" y="892">toom Baumarkt</text><text class="bl2" x="1505" y="903">Oldenburg</text>
<text class="c" x="1307" y="880">NORD-MOSLESFEHN</text><text class="c" x="1279" y="892">SÜDMOSLESFEHN</text><text class="c" x="1401" y="897">HUNDSMÜHLEN</text>
<text x="1434" y="875" font-size="8" font-style="italic" text-anchor="middle" fill="#3a92c4" transform="rotate(-65 1434 875)">Hunte</text>
<text x="1050" y="910" font-size="7.500" fill="#444">©2023 Google - Map data ©2023 Tele Atlas, Imagery ©2023 TerraMetrics</text>
<!-- POI pins -->
<g fill="#6f7f7c"><path d="M1274 603a8 8 0 0 1 8 8c0 4-5 7-8 11-3-4-8-7-8-11a8 8 0 0 1 8-8z"/><path d="M1628 688a7 7 0 0 1 7 7c0 4-4 7-7 12-3-5-7-8-7-12a7 7 0 0 1 7-7z"/><path d="M1857 706a6 6 0 0 1 6 6c0 4-3 6-6 11-3-5-6-7-6-11a6 6 0 0 1 6-6z"/></g>
<circle cx="1274" cy="611" r="3" fill="#cbf4de"/><rect x="1624" y="692" width="8" height="6" fill="#fff"/><circle cx="1857" cy="712" r="2.500" fill="#fff"/>
<g fill="#3f85e0"><path d="M1383 665a8 8 0 0 1 8 8c0 5-5 8-8 14-3-6-8-9-8-14a8 8 0 0 1 8-8z"/><path d="M1579 737a7 7 0 0 1 7 8c0 5-4 8-7 15-3-7-7-10-7-15a7 7 0 0 1 7-8z"/><path d="M1634 866a7 7 0 0 1 7 8c0 5-4 8-7 13-3-5-7-8-7-13a7 7 0 0 1 7-8z"/><path d="M1467 882a7 7 0 0 1 7 8c0 5-4 8-7 13-3-5-7-8-7-13a7 7 0 0 1 7-8z"/><path d="M1514 572a8 8 0 0 1 8 8c0 5-5 8-8 12-3-4-8-7-8-12a8 8 0 0 1 8-8z"/></g>
<g fill="#fff"><rect x="1379" y="670" width="8" height="6" rx="1"/><rect x="1575" y="742" width="8" height="6" rx="1"/><rect x="1630" y="871" width="8" height="6" rx="1"/><rect x="1463" y="887" width="8" height="6" rx="1"/><rect x="1510" y="577" width="8" height="5" rx="1"/></g>
<g fill="#2e9e57"><path d="M1466 772a7 7 0 0 1 7 8c0 5-4 8-7 15-3-7-7-10-7-15a7 7 0 0 1 7-8z"/><path d="M1437 706a7 7 0 0 1 7 8c0 5-4 8-7 18-3-10-7-13-7-18a7 7 0 0 1 7-8z"/></g>
<circle cx="1466" cy="780" r="2.500" fill="#fff"/><circle cx="1437" cy="715" r="3" fill="#fff"/>
<!-- routes -->
<path d="M1330 773l2-18 30-2 30 5 17 25 17 2" fill="none" stroke="#6d6ca8" stroke-width="3.500" stroke-linejoin="round"/>
<path d="M1392 797l-39-9-3 5-18 9-7-14 5-15" fill="none" stroke="#6d6ca8" stroke-width="3.500" stroke-linejoin="round"/>
<path d="M1494 577l2 8 14 2 1 13-4 20-7 30-10 12-10 3c-12 2-22 5-31 14-10 9-15 20-17 36s-9 25-8 42 6 28 14 35 20 4 33 6 22 10 30 14l5-16 28 12" fill="none" stroke="#23246e" stroke-width="4.500" stroke-linejoin="round"/>
<!-- markers -->
<path d="M1497 568l18-10 6 3-20 16z" fill="#666" opacity=".8"/>
<path d="M1496 553a7.500 7.500 0 0 1 7.500 8c0 5-5 8-7.500 16-2.500-8-7.500-11-7.500-16a7.500 7.500 0 0 1 7.500-8z" fill="#4a78ea" stroke="#274aa0"/>
<path d="M1328 765l14-6 5 3-18 11z" fill="#666" opacity=".8"/>
<path d="M1327 749a7.500 7.500 0 0 1 7.500 8c0 5-5 8-7.500 16-2.500-8-7.500-11-7.500-16a7.500 7.500 0 0 1 7.500-8z" fill="#4a78ea" stroke="#274aa0"/>
<path d="M1533 812l14-6 5 3-18 11z" fill="#666" opacity=".8"/>
<path d="M1532 797a7.500 7.500 0 0 1 7.500 8c0 5-5 8-7.500 15-2.500-7-7.500-10-7.500-15a7.500 7.500 0 0 1 7.500-8z" fill="#4a78ea" stroke="#274aa0"/>
<path d="M1392 747a14 14 0 0 1 14 15c0 10-11 18-14 35-3-17-14-25-14-35a14 14 0 0 1 14-15z" fill="#ee6a5e" stroke="#111" stroke-width="1.500"/>
<rect x="1386" y="756" width="12" height="11" fill="#111"/>
<!-- tooltip -->
<rect x="1507.500" y="531.500" width="128" height="27" rx="5" fill="#fff" stroke="#999"/>
<text x="1515" y="545" font-size="9.500" font-weight="bold" fill="#666">3 - Berta Bischoff - 20302</text>
</svg>

<!-- map footer -->
<div class="a" style="left:1045px;top:914px;width:836px;height:34px;background:#808080"></div>
<div class="a" style="left:1059px;top:925px;width:11px;height:11px;background:#1762b8;border-radius:2px"></div>
<svg class="a" style="left:1060px;top:926px" width="9" height="9"><path d="M2 4.500l2 2 3-4" fill="none" stroke="#fff"/></svg>
<div class="t" style="left:1074px;top:923px;font-size:10.500px;color:#d8d8d8">Karte im Vordergrund</div>
<div class="b" style="left:1746px;top:920px;width:32px;height:20px;border-color:#ccc;font-size:10px;line-height:18px;color:#222">+</div>
<div class="b" style="left:1785px;top:920px;width:32px;height:20px;border-color:#ccc;font-size:10px;line-height:18px;color:#222">-</div>
<div class="b" style="left:1823px;top:920px;width:36px;height:20px;border-color:#ccc;font-size:10.500px;line-height:18px;color:#222">Best</div>
</body></html>
